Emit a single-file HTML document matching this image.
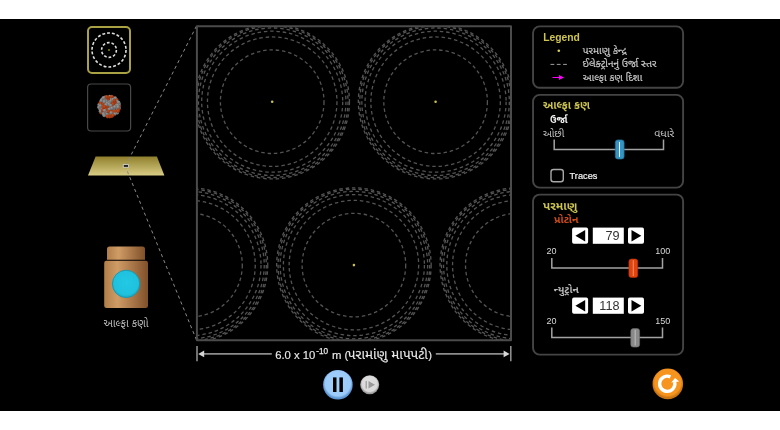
<!DOCTYPE html>
<html lang="gu">
<head>
<meta charset="utf-8">
<title>Rutherford Scattering</title>
<style>
html,body{margin:0;padding:0;background:#fff;}
body{width:780px;height:430px;overflow:hidden;position:relative;font-family:"Liberation Sans", "Noto Sans Gujarati", "Noto Sans Gujarati UI", sans-serif;}
#sim{position:absolute;left:0;top:19px;width:780px;height:392px;background:#000;}
svg{position:absolute;left:0;top:0;will-change:transform;}
text{font-family:"Liberation Sans", "Noto Sans Gujarati", "Noto Sans Gujarati UI", sans-serif;}
.gu{font-family:"Liberation Sans","Noto Sans Gujarati","Noto Sans Gujarati UI",sans-serif;}
</style>
</head>
<body>
<div id="sim"></div>
<svg width="780" height="430" viewBox="0 0 780 430">
<defs>
<clipPath id="boxclip"><rect x="197" y="26" width="314" height="314"/></clipPath>
<radialGradient id="gg" cx="0.4" cy="0.35" r="0.7"><stop offset="0" stop-color="#9a9a9a"/><stop offset="1" stop-color="#5e5e5e"/></radialGradient>
<radialGradient id="gr" cx="0.4" cy="0.35" r="0.7"><stop offset="0" stop-color="#c84e1e"/><stop offset="1" stop-color="#882a0a"/></radialGradient>
<linearGradient id="foil" x1="0" y1="0" x2="0" y2="1"><stop offset="0" stop-color="#8f7f2c"/><stop offset="1" stop-color="#d9cd85"/></linearGradient>
<linearGradient id="gunb" x1="0" y1="0" x2="1" y2="0"><stop offset="0" stop-color="#b07c48"/><stop offset="0.3" stop-color="#d09c66"/><stop offset="1" stop-color="#80502a"/></linearGradient>
<radialGradient id="cy" cx="0.5" cy="0.45" r="0.55"><stop offset="0" stop-color="#22c8e4"/><stop offset="0.8" stop-color="#1fc2de"/><stop offset="1" stop-color="#17a8c4"/></radialGradient>
<radialGradient id="pauseg" cx="0.5" cy="0.45" r="0.5"><stop offset="0" stop-color="#a0d0fc"/><stop offset="0.85" stop-color="#9ccbfa"/><stop offset="1" stop-color="#5f97d4"/></radialGradient>
<radialGradient id="stepg" cx="0.5" cy="0.45" r="0.5"><stop offset="0" stop-color="#e0e0e0"/><stop offset="0.8" stop-color="#dadada"/><stop offset="1" stop-color="#9a9a9a"/></radialGradient>
<radialGradient id="resetg" cx="0.5" cy="0.45" r="0.5"><stop offset="0" stop-color="#f7941e"/><stop offset="0.85" stop-color="#f7941e"/><stop offset="1" stop-color="#c87412"/></radialGradient>
</defs>

<!-- scene buttons -->
<rect x="88" y="27" width="42" height="46" rx="4" ry="4" fill="#000" stroke="#a8a245" stroke-width="2"/>
<g fill="none" stroke="#dcdcdc" stroke-width="1.600">
<circle cx="109" cy="50" r="17" stroke-dasharray="2.9 1.955"/>
<circle cx="109" cy="50" r="7.4" stroke-dasharray="2.7 1.950"/>
</g>
<circle cx="109" cy="50" r="1" fill="#8a8320"/>

<rect x="87.6" y="84" width="43" height="47" rx="3.5" ry="3.5" fill="#000" stroke="#484848" stroke-width="1.2"/>
<g>
<circle cx="107.39" cy="110.11" r="1.8" fill="url(#gg)"/>
<circle cx="116.04" cy="109.85" r="1.8" fill="url(#gr)"/>
<circle cx="115.86" cy="108.10" r="1.8" fill="url(#gr)"/>
<circle cx="110.90" cy="103.26" r="1.8" fill="url(#gr)"/>
<circle cx="102.15" cy="99.23" r="1.8" fill="url(#gg)"/>
<circle cx="101.01" cy="112.71" r="1.8" fill="url(#gr)"/>
<circle cx="112.73" cy="102.15" r="1.8" fill="url(#gr)"/>
<circle cx="113.47" cy="110.40" r="1.8" fill="url(#gg)"/>
<circle cx="112.54" cy="113.69" r="1.8" fill="url(#gg)"/>
<circle cx="103.85" cy="112.03" r="1.8" fill="url(#gr)"/>
<circle cx="113.59" cy="108.23" r="1.8" fill="url(#gg)"/>
<circle cx="103.96" cy="109.06" r="1.8" fill="url(#gg)"/>
<circle cx="111.59" cy="98.14" r="1.8" fill="url(#gr)"/>
<circle cx="102.47" cy="103.10" r="1.8" fill="url(#gg)"/>
<circle cx="108.48" cy="100.97" r="1.8" fill="url(#gg)"/>
<circle cx="109.38" cy="102.45" r="1.8" fill="url(#gg)"/>
<circle cx="117.44" cy="108.57" r="1.8" fill="url(#gg)"/>
<circle cx="100.48" cy="102.19" r="1.8" fill="url(#gr)"/>
<circle cx="106.50" cy="98.95" r="1.8" fill="url(#gg)"/>
<circle cx="100.03" cy="109.09" r="1.8" fill="url(#gg)"/>
<circle cx="110.95" cy="109.60" r="1.8" fill="url(#gr)"/>
<circle cx="109.30" cy="113.00" r="1.8" fill="url(#gg)"/>
<circle cx="113.28" cy="97.73" r="1.8" fill="url(#gr)"/>
<circle cx="116.80" cy="99.73" r="1.8" fill="url(#gr)"/>
<circle cx="104.68" cy="103.67" r="1.8" fill="url(#gr)"/>
<circle cx="102.88" cy="100.74" r="1.8" fill="url(#gr)"/>
<circle cx="115.79" cy="111.52" r="1.8" fill="url(#gr)"/>
<circle cx="112.38" cy="111.67" r="1.8" fill="url(#gr)"/>
<circle cx="113.24" cy="106.51" r="1.8" fill="url(#gr)"/>
<circle cx="108.11" cy="107.76" r="1.8" fill="url(#gg)"/>
<circle cx="115.24" cy="98.07" r="1.8" fill="url(#gg)"/>
<circle cx="106.17" cy="106.81" r="1.8" fill="url(#gr)"/>
<circle cx="119.24" cy="107.97" r="1.8" fill="url(#gg)"/>
<circle cx="113.84" cy="112.60" r="1.8" fill="url(#gr)"/>
<circle cx="99.07" cy="104.69" r="1.8" fill="url(#gg)"/>
<circle cx="110.24" cy="98.98" r="1.8" fill="url(#gg)"/>
<circle cx="108.70" cy="115.14" r="1.8" fill="url(#gg)"/>
<circle cx="119.33" cy="105.74" r="1.8" fill="url(#gr)"/>
<circle cx="110.11" cy="111.37" r="1.8" fill="url(#gr)"/>
<circle cx="100.87" cy="107.58" r="1.8" fill="url(#gg)"/>
<circle cx="116.96" cy="101.56" r="1.8" fill="url(#gg)"/>
<circle cx="110.66" cy="100.68" r="1.8" fill="url(#gg)"/>
<circle cx="115.64" cy="105.34" r="1.8" fill="url(#gg)"/>
<circle cx="117.56" cy="103.60" r="1.8" fill="url(#gr)"/>
<circle cx="114.94" cy="114.01" r="1.8" fill="url(#gg)"/>
<circle cx="105.81" cy="101.36" r="1.8" fill="url(#gg)"/>
<circle cx="110.04" cy="107.41" r="1.8" fill="url(#gg)"/>
<circle cx="115.46" cy="103.73" r="1.8" fill="url(#gg)"/>
<circle cx="100.45" cy="111.27" r="1.8" fill="url(#gg)"/>
<circle cx="101.83" cy="105.01" r="1.8" fill="url(#gr)"/>
<circle cx="105.76" cy="113.15" r="1.8" fill="url(#gg)"/>
<circle cx="109.82" cy="96.59" r="1.8" fill="url(#gg)"/>
<circle cx="101.94" cy="108.74" r="1.8" fill="url(#gg)"/>
<circle cx="109.37" cy="109.31" r="1.8" fill="url(#gg)"/>
<circle cx="107.10" cy="103.18" r="1.8" fill="url(#gg)"/>
<circle cx="98.89" cy="107.33" r="1.8" fill="url(#gg)"/>
<circle cx="103.17" cy="105.91" r="1.8" fill="url(#gr)"/>
<circle cx="106.13" cy="115.03" r="1.8" fill="url(#gr)"/>
<circle cx="108.38" cy="98.82" r="1.8" fill="url(#gr)"/>
<circle cx="119.16" cy="104.06" r="1.8" fill="url(#gg)"/>
<circle cx="109.56" cy="116.71" r="1.8" fill="url(#gr)"/>
<circle cx="104.37" cy="99.14" r="1.8" fill="url(#gg)"/>
<circle cx="108.25" cy="97.18" r="1.8" fill="url(#gr)"/>
<circle cx="112.87" cy="99.45" r="1.8" fill="url(#gg)"/>
<circle cx="108.14" cy="106.02" r="1.8" fill="url(#gr)"/>
<circle cx="107.30" cy="113.73" r="1.8" fill="url(#gg)"/>
<circle cx="111.73" cy="116.29" r="1.8" fill="url(#gr)"/>
<circle cx="115.00" cy="102.15" r="1.8" fill="url(#gr)"/>
<circle cx="116.49" cy="106.66" r="1.8" fill="url(#gg)"/>
<circle cx="105.95" cy="111.36" r="1.8" fill="url(#gg)"/>
<circle cx="108.76" cy="104.23" r="1.8" fill="url(#gg)"/>
<circle cx="118.74" cy="109.53" r="1.8" fill="url(#gr)"/>
<circle cx="103.20" cy="107.56" r="1.8" fill="url(#gr)"/>
<circle cx="105.85" cy="109.12" r="1.8" fill="url(#gr)"/>
<circle cx="102.75" cy="110.38" r="1.8" fill="url(#gr)"/>
<circle cx="107.44" cy="116.58" r="1.8" fill="url(#gr)"/>
<circle cx="108.52" cy="111.64" r="1.8" fill="url(#gr)"/>
<circle cx="105.02" cy="97.31" r="1.8" fill="url(#gg)"/>
<circle cx="103.35" cy="113.89" r="1.8" fill="url(#gg)"/>
<circle cx="113.20" cy="104.29" r="1.8" fill="url(#gr)"/>
<circle cx="110.64" cy="105.41" r="1.8" fill="url(#gg)"/>
<circle cx="111.99" cy="108.13" r="1.8" fill="url(#gg)"/>
<circle cx="117.40" cy="112.83" r="1.8" fill="url(#gg)"/>
<circle cx="110.40" cy="114.82" r="1.8" fill="url(#gr)"/>
<circle cx="117.96" cy="111.16" r="1.8" fill="url(#gr)"/>
<circle cx="105.96" cy="104.74" r="1.8" fill="url(#gg)"/>
<circle cx="104.21" cy="115.52" r="1.8" fill="url(#gg)"/>
<circle cx="117.51" cy="105.18" r="1.8" fill="url(#gg)"/>
<circle cx="101.30" cy="100.62" r="1.8" fill="url(#gg)"/>
<circle cx="114.48" cy="100.67" r="1.8" fill="url(#gr)"/>
<circle cx="112.91" cy="115.23" r="1.8" fill="url(#gr)"/>
<circle cx="106.64" cy="96.89" r="1.8" fill="url(#gr)"/>
<circle cx="100.54" cy="103.79" r="1.8" fill="url(#gr)"/>
<circle cx="104.27" cy="101.63" r="1.8" fill="url(#gg)"/>
<circle cx="118.58" cy="102.36" r="1.8" fill="url(#gg)"/>
<circle cx="104.59" cy="110.53" r="1.8" fill="url(#gg)"/>
<circle cx="100.25" cy="105.75" r="1.8" fill="url(#gg)"/>
<circle cx="114.76" cy="106.90" r="1.8" fill="url(#gg)"/>
<circle cx="111.12" cy="112.74" r="1.8" fill="url(#gg)"/>
<circle cx="118.03" cy="106.92" r="1.8" fill="url(#gg)"/>
<circle cx="111.85" cy="96.55" r="1.8" fill="url(#gr)"/>
<circle cx="104.59" cy="106.86" r="1.8" fill="url(#gr)"/>
<circle cx="103.40" cy="97.91" r="1.8" fill="url(#gg)"/>
</g>

<!-- gold foil -->
<polygon points="95.6,156.5 156.9,156.5 164.4,175.5 88,175.5" fill="url(#foil)"/>
<rect x="123.3" y="164.6" width="5.2" height="2.700" fill="#222" stroke="#d8d8d8" stroke-width="0.800"/>
<g stroke="#8a8a8a" stroke-width="1" stroke-dasharray="3.2 3.2" fill="none">
<line x1="196.5" y1="26" x2="126.5" y2="164"/>
<line x1="196.5" y1="340" x2="126" y2="168"/>
</g>

<!-- alpha source -->
<path d="M107,259.8 V249.100 a2.5,2.5 0 0 1 2.5,-2.5 H142.5 a2.5,2.5 0 0 1 2.500,2.5 V259.8 Z" fill="url(#gunb)"/>
<path d="M104.2,263 a2.2,2.2 0 0 1 2.2,-2.200 H145.800 a2.2,2.2 0 0 1 2.200,2.2 V305.400 a2.5,2.5 0 0 1 -2.5,2.5 H106.7 a2.5,2.5 0 0 1 -2.5,-2.5 Z" fill="url(#gunb)"/>
<circle cx="126.1" cy="283.900" r="13.700" fill="url(#cy)" stroke="#1596b0" stroke-width="0.9"/>
<text class="gu" x="103.5" y="327.3" font-size="10.6" fill="#c4c4c4" textLength="45" lengthAdjust="spacingAndGlyphs">આલ્ફા કણો</text>

<!-- main box -->
<g clip-path="url(#boxclip)">
<g fill="none" stroke="#545454" stroke-width="1.300" stroke-dasharray="3.5 2.84">
<circle cx="272.2" cy="101.7" r="51.80"/>
<circle cx="272.2" cy="101.7" r="64.75"/>
<circle cx="272.2" cy="101.7" r="70.51"/>
<circle cx="272.2" cy="101.7" r="73.74"/>
<circle cx="272.2" cy="101.7" r="75.82"/>
<circle cx="272.2" cy="101.7" r="77.25"/>
<circle cx="435.6" cy="101.7" r="51.80"/>
<circle cx="435.6" cy="101.7" r="64.75"/>
<circle cx="435.6" cy="101.7" r="70.51"/>
<circle cx="435.6" cy="101.7" r="73.74"/>
<circle cx="435.6" cy="101.7" r="75.82"/>
<circle cx="435.6" cy="101.7" r="77.25"/>
<circle cx="353.9" cy="265.1" r="51.80"/>
<circle cx="353.9" cy="265.1" r="64.75"/>
<circle cx="353.9" cy="265.1" r="70.51"/>
<circle cx="353.9" cy="265.1" r="73.74"/>
<circle cx="353.9" cy="265.1" r="75.82"/>
<circle cx="353.9" cy="265.1" r="77.25"/>
<circle cx="190.5" cy="265.1" r="51.80"/>
<circle cx="190.5" cy="265.1" r="64.75"/>
<circle cx="190.5" cy="265.1" r="70.51"/>
<circle cx="190.5" cy="265.1" r="73.74"/>
<circle cx="190.5" cy="265.1" r="75.82"/>
<circle cx="190.5" cy="265.1" r="77.25"/>
<circle cx="517.3" cy="265.1" r="51.80"/>
<circle cx="517.3" cy="265.1" r="64.75"/>
<circle cx="517.3" cy="265.1" r="70.51"/>
<circle cx="517.3" cy="265.1" r="73.74"/>
<circle cx="517.3" cy="265.1" r="75.82"/>
<circle cx="517.3" cy="265.1" r="77.25"/>
</g>
<g fill="#c8c050">
<circle cx="272.2" cy="101.7" r="1.3"/>
<circle cx="435.6" cy="101.7" r="1.3"/>
<circle cx="353.9" cy="265.1" r="1.3"/>
<circle cx="190.5" cy="265.1" r="1.3"/>
<circle cx="517.3" cy="265.1" r="1.3"/>
</g>
</g>
<rect x="196.9" y="26.200" width="314.100" height="314.100" fill="none" stroke="#4b4b4b" stroke-width="2" stroke-linejoin="round"/>

<!-- scale -->
<g stroke="#8c8c8c" stroke-width="1.600" fill="#d6d6d6">
<line x1="197" y1="346" x2="197" y2="361.300"/>
<line x1="510.8" y1="346" x2="510.800" y2="361.300"/>
<line x1="203" y1="353.9" x2="271.800" y2="353.900"/>
<line x1="435.8" y1="353.9" x2="505" y2="353.900"/>
<polygon points="198.2,353.9 204.2,350.600 204.2,357.200" stroke="none"/>
<polygon points="509.6,353.9 503.600,350.600 503.600,357.200" stroke="none"/>
</g>
<g font-size="11.300" fill="#e8e8e8" stroke="#e8e8e8" stroke-width="0.15">
<text x="275.200" y="359.200">6.0 x 10</text>
<text x="316.300" y="354.100" font-size="8.2" stroke="#e8e8e8" stroke-width="0.25">-10</text>
<text x="332" y="359.200">m (</text>
<text class="gu" x="347.800" y="358.900" font-size="13" textLength="80" lengthAdjust="spacingAndGlyphs">પરામાંણુ માપપટી</text>
<text x="428.300" y="359.200">)</text>
</g>

<!-- play controls -->
<circle cx="337.9" cy="384.8" r="14.800" fill="url(#pauseg)"/>
<rect x="333" y="377.4" width="3.5" height="14.6" fill="#000"/>
<rect x="339.400" y="377.4" width="3.5" height="14.6" fill="#000"/>
<circle cx="369.7" cy="384.8" r="9.500" fill="url(#stepg)"/>
<rect x="365.6" y="381" width="1.2" height="7.5" fill="#9a9a9a"/>
<polygon points="368.500,381 375,384.75 368.500,388.5" fill="#9a9a9a"/>

<!-- reset -->
<circle cx="667.8" cy="383.900" r="15.300" fill="url(#resetg)"/>
<path d="M 670.4,376.900 A 7.600,7.600 0 1 0 674.600,382" fill="none" stroke="#fff" stroke-width="3.400"/>
<polygon points="671.2,382.500 679.2,381.600 675.100,377.900" fill="#fff"/>

<!-- Legend panel -->
<rect x="533.05" y="26.4" width="150.05" height="61.400" rx="6.5" ry="6.5" fill="#000" stroke="#444" stroke-width="1.900"/>
<text x="543.200" y="40.500" font-size="10.300" font-weight="bold" fill="#ccc44e">Legend</text>
<circle cx="558.8" cy="50.8" r="1.300" fill="#d8d058"/>
<line x1="550.5" y1="64.4" x2="567" y2="64.400" stroke="#b0b0b0" stroke-width="0.9" stroke-dasharray="3.8 2.5"/>
<line x1="552.5" y1="77.5" x2="560" y2="77.500" stroke="#ff00ff" stroke-width="1"/>
<polygon points="564,77.5 559,75 559,80" fill="#ff00ff"/>
<g class="gu" font-size="10.100" fill="#c8c8c8" stroke="#c8c8c8" stroke-width="0.2">
<text x="582.8" y="53.800" textLength="43.8" lengthAdjust="spacingAndGlyphs">પરમાણુ કેન્દ્ર</text>
<text x="582.6" y="67.300" textLength="74" lengthAdjust="spacingAndGlyphs">ઈલેક્ટ્રોનનું ઉર્જા સ્તર</text>
<text x="582.7" y="80.700" textLength="59.6" lengthAdjust="spacingAndGlyphs">આલ્ફા કણ દિશા</text>
</g>

<!-- Alpha particle panel -->
<rect x="533.05" y="94.9" width="150.05" height="92.700" rx="6.5" ry="6.5" fill="#000" stroke="#444" stroke-width="1.900"/>
<text class="gu" x="542.9" y="108.600" font-size="12.2" font-weight="bold" fill="#ccc44e" textLength="46.9" lengthAdjust="spacingAndGlyphs">આલ્ફા કણ</text>
<text class="gu" x="550" y="122.900" font-size="9.8" font-weight="bold" fill="#f0f0f0" textLength="17.6" lengthAdjust="spacingAndGlyphs">ઉર્જા</text>
<text class="gu" x="542.9" y="136.800" font-size="10.2" fill="#c8c8c8" textLength="21.4" lengthAdjust="spacingAndGlyphs">ઓછી</text>
<text class="gu" x="654.2" y="136.800" font-size="10.2" fill="#c8c8c8" textLength="20" lengthAdjust="spacingAndGlyphs">વધારે</text>
<path d="M554.2,139.400 V149.600 H663.500 V139.400" fill="none" stroke="#a2a2a2" stroke-width="1.500"/>
<rect x="615.3" y="139.900" width="8.800" height="19.100" rx="2.500" ry="2.500" fill="#3595c2" stroke="#216f96" stroke-width="0.7"/>
<line x1="619.5" y1="141.900" x2="619.500" y2="156.900" stroke="#eef6fb" stroke-width="1"/>
<rect x="551" y="169.500" width="12.300" height="12.300" rx="2.500" ry="2.500" fill="#000" stroke="#a8a8a8" stroke-width="1.400"/>
<text x="569.6" y="179" font-size="9.3" fill="#f4f4f4" stroke="#f4f4f4" stroke-width="0.2" textLength="27.8" lengthAdjust="spacingAndGlyphs">Traces</text>

<!-- Atom panel -->
<rect x="533.05" y="194.6" width="150.05" height="160" rx="6.5" ry="6.5" fill="#000" stroke="#444" stroke-width="1.900"/>
<text class="gu" x="543.1" y="209.700" font-size="11.2" font-weight="bold" fill="#ccc44e" textLength="34.2" lengthAdjust="spacingAndGlyphs">પરમાણુ</text>
<text class="gu" x="554.1" y="222.900" font-size="9.8" font-weight="bold" fill="#d04c1a" textLength="24.3" lengthAdjust="spacingAndGlyphs">પ્રોટોન</text>
<text class="gu" x="553.7" y="293.200" font-size="9.8" font-weight="bold" fill="#b8b8b8" textLength="25" lengthAdjust="spacingAndGlyphs">ન્યુટ્રોન</text>
<rect x="572.1" y="227.6" width="16" height="16.200" rx="1.800" ry="1.800" fill="#fff"/>
<polygon points="575.4,235.7 585.2,229.9 585.2,241.4" fill="#000"/>
<rect x="592.8" y="227.6" width="31" height="16.200" fill="#fff"/>
<text x="619.6" y="240.29999999999998" font-size="12.700" fill="#333" text-anchor="end">79</text>
<rect x="628" y="227.6" width="16" height="16.200" rx="1.800" ry="1.800" fill="#fff"/>
<polygon points="641.3,235.7 631.5,229.9 631.5,241.4" fill="#000"/>
<text x="546.600" y="254.4" font-size="9" fill="#d8d8d8">20</text>
<text x="670.2" y="254.4" font-size="9" fill="#d8d8d8" text-anchor="end">100</text>
<path d="M551.8,258 V268 H662.500 V258" fill="none" stroke="#a2a2a2" stroke-width="1.500"/>
<rect x="628.9" y="259" width="8.800" height="18.500" rx="2.500" ry="2.500" fill="#e2420c" stroke="#b83208" stroke-width="0.6"/>
<line x1="633.3" y1="260.2" x2="633.3" y2="276" stroke="#ee8a62" stroke-width="1.100"/>
<rect x="572.1" y="297.6" width="16" height="16.200" rx="1.800" ry="1.800" fill="#fff"/>
<polygon points="575.4,305.70000000000005 585.2,299.90000000000003 585.2,311.40000000000003" fill="#000"/>
<rect x="592.8" y="297.6" width="31" height="16.200" fill="#fff"/>
<text x="619.6" y="310.3" font-size="12.700" fill="#333" text-anchor="end">118</text>
<rect x="628" y="297.6" width="16" height="16.200" rx="1.800" ry="1.800" fill="#fff"/>
<polygon points="641.3,305.70000000000005 631.5,299.90000000000003 631.5,311.40000000000003" fill="#000"/>
<text x="546.600" y="324.0" font-size="9" fill="#d8d8d8">20</text>
<text x="670.2" y="324.0" font-size="9" fill="#d8d8d8" text-anchor="end">150</text>
<path d="M551.8,327.6 V337.6 H662.500 V327.6" fill="none" stroke="#a2a2a2" stroke-width="1.500"/>
<rect x="630.8000000000001" y="328.6" width="8.800" height="18.500" rx="2.500" ry="2.500" fill="#8a8a8a" stroke="#6c6c6c" stroke-width="0.6"/>
<line x1="635.2" y1="329.8" x2="635.2" y2="345.6" stroke="#b8b8b8" stroke-width="1.100"/>
</svg>
</body>
</html>
